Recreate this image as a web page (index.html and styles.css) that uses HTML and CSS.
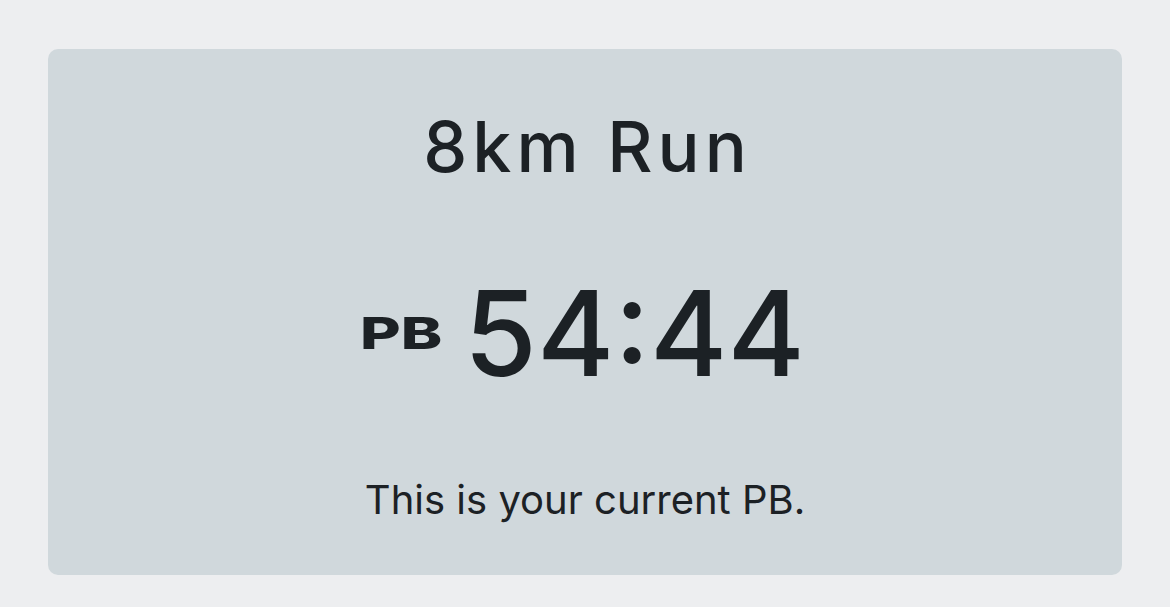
FILE: index.html
```html
<!DOCTYPE html>
<html lang="en">
<head>
  <meta charset="UTF-8">
  <meta name="viewport" content="width=device-width, initial-scale=1">
  <title>8km Run PB</title>
  <link rel="stylesheet" href="styles.css">
</head>
<body>

  <div class="card">
    <h1 class="title">8km Run</h1>
    <div class="record">
      <span class="label">PB</span>
      <span class="time">54:44</span>
    </div>
    <p class="note">This is your current PB.</p>
  </div>

</body>
</html>
```

FILE: styles.css
```css
body {
  font-family: Inter, "Liberation Sans", sans-serif;
  margin: 0;
  padding: 49px 48px 32px;
  background: #edeef0;
  color: #1c2125;
}

.card {
  background: #d0d8dc;
  border-radius: 10px;
  height: 526px;
  display: flex;
  flex-direction: column;
  align-items: center;
  box-sizing: border-box;
  padding-top: 58px;
}

.title {
  margin: 0;
  font-size: 70px;
  font-weight: 500;
  line-height: 80px;
  letter-spacing: 5px;
  padding-left: 5px;
}

.record {
  display: flex;
  align-items: center;
  margin-top: 86px;
  padding-right: 5px;
}

/* wide bold label */
.label {
  display: inline-block;
  font-size: 44px;
  font-weight: 800;
  line-height: 44px;
  transform: scaleX(1.42);
  transform-origin: left center;
  margin-right: 46px;
}

.time {
  font-size: 118px;
  font-weight: 500;
  line-height: 120px;
}

.note {
  margin: 82px 0 0;
  font-size: 40px;
  font-weight: 400;
}
```
